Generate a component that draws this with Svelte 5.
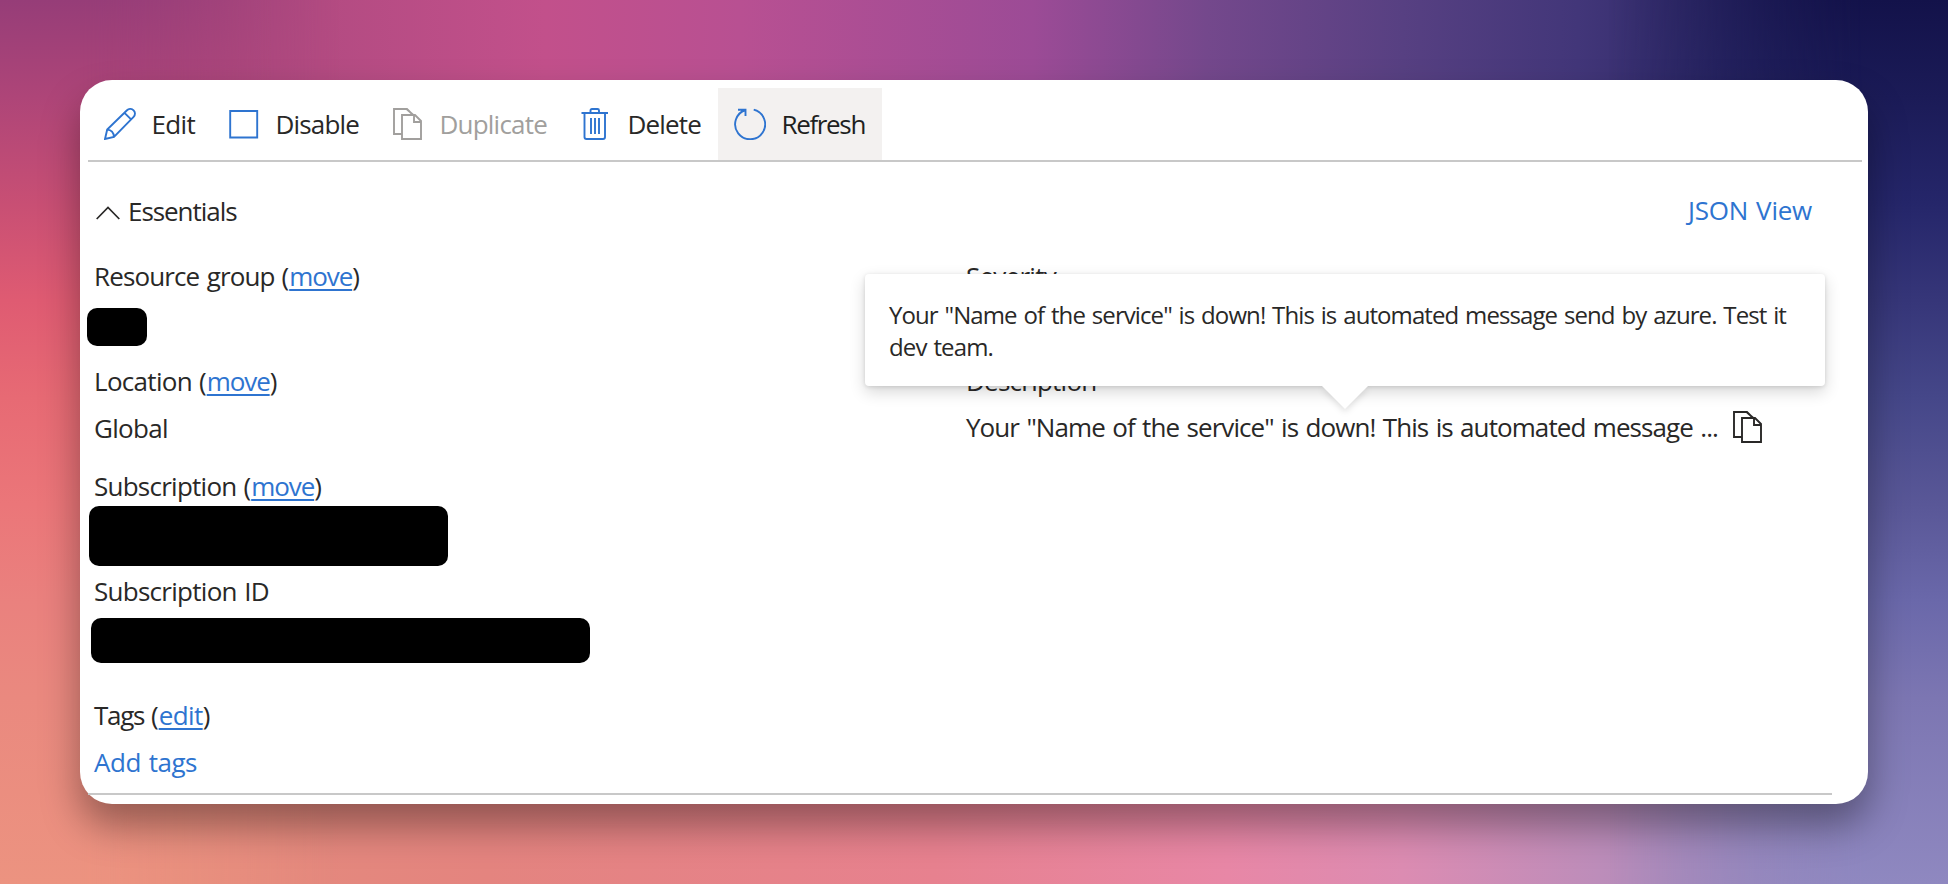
<script>
  const actions = [
    { label: 'Edit', icon: 'edit', width: 44 },
    { label: 'Disable', icon: 'square', width: 84 },
    { label: 'Duplicate', icon: 'copy', width: 108, disabled: true },
    { label: 'Delete', icon: 'trash', width: 74 },
    { label: 'Refresh', icon: 'refresh', width: 84, active: true }
  ];

  // Tracks each label so that it fills the given number of pixels.
  function fit(node, width) {
    const natural = node.getBoundingClientRect().width;
    node.style.letterSpacing = (width - natural) / node.textContent.length + 'px';
  }
</script>

{#snippet copyIcon()}
  <svg class="icon" viewBox="0 0 32 32">
    <path d="M9.500 26H2V1h13l5 5M10 7h13l6 6v18H10zM22 7v7h7M14.500 1l8 7" />
  </svg>
{/snippet}

{#snippet field(label, labelWidth, link, linkWidth)}
  <span use:fit={labelWidth}>{label}</span><span class="gap"></span><span>(</span><a href="#{link}"><span use:fit={linkWidth}>{link}</span></a><span>)</span>
{/snippet}

<main>
  <section class="card">
    <nav>
      {#each actions as a}
        <button class:active={a.active} class:disabled={a.disabled}>
          {#if a.icon === 'edit'}
            <svg class="icon" viewBox="0 0 32 32">
              <path d="M1 31l2.200-9.400L23 2.300a4.600 4.600 0 0 1 6.600 6.600L10 28.800zM3.200 21.600c3.800.3 6.500 3.200 6.800 7.200M20.500 4.800l6.600 6.600" />
            </svg>
          {:else if a.icon === 'square'}
            <svg class="icon" viewBox="0 0 32 32"><path d="M2.200 3h27v26.500h-27z" /></svg>
          {:else if a.icon === 'copy'}
            {@render copyIcon()}
          {:else if a.icon === 'trash'}
            <svg class="icon" viewBox="0 0 32 32">
              <path d="M1.500 5h26.500M10.500 5V2.500q0-1.500 1.500-1.500h5.500q1.500 0 1.500 1.500V5M4.500 5v24q0 2 2 2h16.500q2 0 2-2V5M11 10v16M15 10v16M19 10v16" />
            </svg>
          {:else}
            <svg class="icon" viewBox="0 0 32 32">
              <path d="M19.700 1.700A15 15 0 1 1 11.500 2M4 1.800h7.500V8" />
            </svg>
          {/if}
          <span class="cell" style:width="{a.width}px"><span use:fit={a.width - 0.5}>{a.label}</span></span>
        </button>
      {/each}
    </nav>

    <header>
      <div class="title">
        <svg viewBox="0 0 24 14"><path d="M.7 13 12 1.500 23.300 13" /></svg>
        <span use:fit={108.5}>Essentials</span>
      </div>
      <a class="plain" href="#json"><span use:fit={124}>JSON View</span></a>
    </header>

    <div class="columns">
      <div class="left">
        <div class="row r1">{@render field('Resource group', 180.500, 'move', 63)}</div>
        <div class="redact b1"></div>
        <div class="row r2">{@render field('Location', 98, 'move', 63)}</div>
        <div class="row r3"><span use:fit={74}>Global</span></div>
        <div class="row r4">{@render field('Subscription', 142.500, 'move', 63)}</div>
        <div class="redact b2"></div>
        <div class="row r5"><span use:fit={175}>Subscription ID</span></div>
        <div class="redact b3"></div>
        <div class="row r6">{@render field('Tags', 50, 'edit', 44)}</div>
        <div class="row r7"><a class="plain" href="#t"><span use:fit={103}>Add tags</span></a></div>
      </div>
      <div class="right">
        <div class="row"><span use:fit={90}>Severity</span></div>
        <div class="row desc"><span use:fit={130.5}>Description</span></div>
        <div class="row value">
          <span class="clip"><span use:fit={752}>Your "Name of the service" is down! This is automated message ...</span></span>
          {@render copyIcon()}
        </div>
        <div class="tooltip">
          <div><span use:fit={897}>Your "Name of the service" is down! This is automated message send by azure. Test it</span></div>
          <div><span use:fit={104}>dev team.</span></div>
          <svg class="arrow" viewBox="0 0 46 23"><path d="M0 0h46L23 23z" /></svg>
        </div>
      </div>
    </div>
  </section>
</main>

<style>
  main {
    box-sizing: border-box;
    width: 1948px;
    height: 884px;
    padding: 80px;
    overflow: hidden;
    position: relative;
    background:
      linear-gradient(90deg, #963d77, #b04a80 14%, #c2508b 28%, #b85092 38%, #9c4b96 53%, #74488c 62%, #574082 72%, #423679 81%, #292663 90%, #14144c 100%) 0 0 / 100% 300px no-repeat,
      linear-gradient(90deg, #ec9380, #e48c7c 8%, #e4847f 25%, #e7818f 48%, #e887a6 63%, #dc8cb2 72%, #bd8dba 82%, #a088ba 90%, #8d86c0 100%);
    font-family: 'Open Sans', 'Noto Sans', sans-serif;
    font-size: 26px;
    line-height: 34px;
    color: #292827;
  }
  main::before,
  main::after {
    content: '';
    position: absolute;
    top: 0;
    bottom: 0;
    width: 340px;
  }
  main::before {
    left: 0;
    background: linear-gradient(#963d78, #ae4578 11%, #c84f74 23%, #df5b72 34%, #e76a74 45%, #eb7679 57%, #ea817e 68%, #ea897f 79%, #ec9380);
    mask-image: linear-gradient(90deg, #000 24%, #0000);
  }
  main::after {
    right: 0;
    background: linear-gradient(#13124a, #1b1b57 11%, #25266a 23%, #363679 34%, #454789 45%, #595797 57%, #6a68aa 68%, #7c76b2 79%, #8f88c0);
    mask-image: linear-gradient(270deg, #000 24%, #0000);
  }
  .card {
    box-sizing: border-box;
    position: relative;
    z-index: 1;
    width: 1788px;
    height: 724px;
    padding: 8px 6px 0 8px;
    border-radius: 32px;
    background: #fff;
    box-shadow: 0 22px 38px rgba(0, 0, 0, 0.36);
  }
  nav {
    display: flex;
    height: 72px;
    border-bottom: 2px solid #c8c8c8;
  }
  button {
    display: flex;
    align-items: center;
    gap: 16px;
    padding: 0 16px;
    border: 0;
    background: none;
    color: inherit;
    font: inherit;
  }
  button .icon { stroke: #2e74d0; }
  .active { background: #f3f1f0; color: #201f1e; }
  .disabled { color: #a19f9d; }
  .disabled .icon { stroke: #a19f9d; }
  .cell { text-align: left; text-indent: -0.5px; }
  span { white-space: pre; word-spacing: 1.5px; }
  svg { display: block; fill: none; stroke: #292827; stroke-width: 1.9; }
  .icon { width: 32px; height: 32px; flex: none; }
  header {
    display: flex;
    justify-content: space-between;
    height: 36px;
    padding: 32px 50px 0 8px;
  }
  header a { margin-top: -1px; }
  .title { display: flex; align-items: center; gap: 8px; margin-top: -2px; }
  .title svg { width: 24px; height: 14px; margin-top: 4px; stroke-width: 1.7; }
  a { color: #2e74d0; text-decoration: underline; text-decoration-thickness: 2px; text-underline-offset: 3px; }
  .plain { text-decoration: none; }
  .columns {
    display: grid;
    grid-template-columns: 873px 1fr;
    height: 534px;
    margin-top: 29px;
    margin-right: 30px;
    border-bottom: 2px solid #c8c8c8;
  }
  .left { padding-left: 6px; }
  .row { height: 36px; display: flex; }
  .gap { width: 7px; }
  .redact { background: #000; border-radius: 10px; }
  .b1 { width: 60px; height: 38px; margin: 13px 0 0 -7.5px; }
  .r2 { margin-top: 18px; }
  .r3 { margin-top: 11px; }
  .r4 { margin-top: 22px; }
  .b2 { width: 359px; height: 60px; margin: 1px 0 0 -5px; }
  .r5 { margin-top: 8px; }
  .b3 { width: 499px; height: 45px; margin: 8px 0 0 -3.5px; }
  .r6 { margin-top: 35px; }
  .r7 { margin-top: 11px; }
  .right { position: relative; padding-left: 5px; }
  .desc { margin-top: 69px; }
  .value { margin-top: 10px; }
  .value .icon { margin-top: 1px; }
  .clip { width: 766px; flex: none; }
  .tooltip {
    box-sizing: border-box;
    position: absolute;
    left: -96px;
    top: 15px;
    width: 960px;
    height: 112px;
    padding: 25px 24px 0;
    border-radius: 4px;
    background: #fff;
    box-shadow: 0 6px 16px rgba(0, 0, 0, 0.16), 0 1px 4px rgba(0, 0, 0, 0.12);
    font-size: 24px;
    line-height: 32px;
  }
  .arrow {
    position: absolute;
    left: 457px;
    top: 112px;
    width: 46px;
    height: 23px;
    fill: #fff;
    stroke: none;
    overflow: visible;
    filter: drop-shadow(0 3px 3px rgba(0, 0, 0, 0.12));
    clip-path: inset(0 -10px -10px);
  }
</style>
